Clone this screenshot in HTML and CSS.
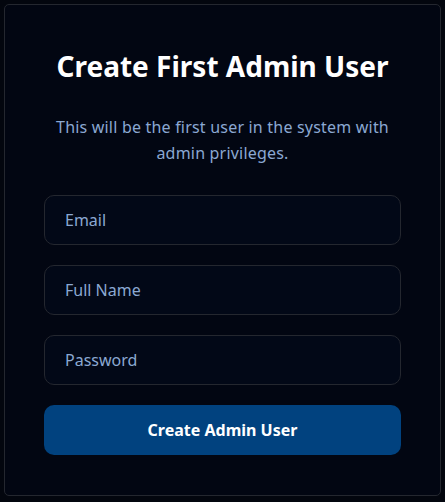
FILE: index.html
```html
<!DOCTYPE html>
<html>
<head>
<meta charset="utf-8">
<link rel="stylesheet" href="styles.css">
</head>
<body>
<div class="card">
  <h1 class="title">Create First Admin User</h1>
  <p class="subtitle">This will be the first user in the system with admin privileges.</p>
  <form class="form">
    <input class="field" type="email" placeholder="Email">
    <input class="field" type="text" placeholder="Full Name">
    <input class="field" type="password" placeholder="Password">
    <button class="submit" type="button">Create Admin User</button>
  </form>
</div>
</body>
</html>
```

FILE: styles.css
```css
html, body {
  margin: 0;
  background: #03060e;
}
body {
  padding: 4px;
  font-family: "Noto Sans", sans-serif;
}
.card {
  box-sizing: border-box;
  width: 437px;
  height: 492px;
  border: 1px solid #24272f;
  border-radius: 5px;
  background: #020612;
  padding: 43px 39px 0;
}
.title {
  margin: 0;
  text-align: center;
  color: #ffffff;
  font-size: 28px;
  font-weight: 700;
  line-height: 36px;
}
.subtitle {
  margin: 30px 0 0;
  text-align: center;
  color: #8ba8d2;
  font-size: 16px;
  line-height: 26px;
  letter-spacing: 0.2px;
}
.form {
  display: flex;
  flex-direction: column;
  gap: 20px;
  margin-top: 29px;
}
.field {
  box-sizing: border-box;
  height: 50px;
  width: 100%;
  border: 1px solid #24272f;
  border-radius: 10px;
  background: #020817;
  padding: 0 20px;
  font-family: inherit;
  font-size: 16px;
  color: #8ba8d2;
  outline: none;
}
.field::placeholder {
  color: #8ba8d2;
  opacity: 1;
}
.submit {
  height: 50px;
  width: 100%;
  border: none;
  border-radius: 10px;
  background: #01427f;
  color: #ffffff;
  font-family: inherit;
  font-size: 16px;
  font-weight: 700;
}
```
